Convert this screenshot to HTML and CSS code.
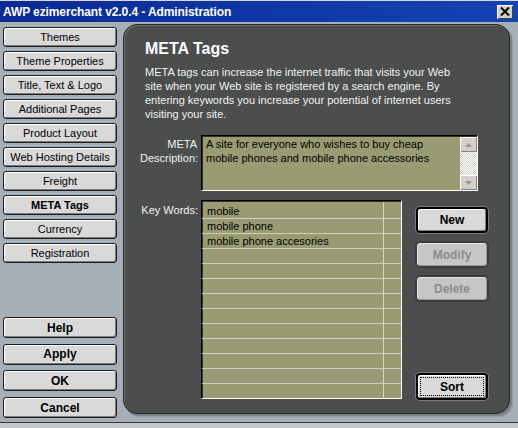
FILE: index.html
```html
<!DOCTYPE html>
<html>
<head>
<meta charset="utf-8">
<title>AWP ezimerchant v2.0.4 - Administration</title>
<link rel="stylesheet" href="styles.css">
</head>
<body>
<div class="window">
  <div class="titlebar">
    <span class="title">AWP ezimerchant v2.0.4 - Administration</span>
    <span class="close"><svg width="10" height="9" viewBox="0 0 10 9"><path d="M1 0.5 L9 8.5 M9 0.5 L1 8.5" stroke="#000" stroke-width="2" fill="none"/></svg></span>
  </div>
  <div class="main">
    <div class="sidebar">
      <div class="nav">
        <div class="btn">Themes</div>
        <div class="btn">Theme Properties</div>
        <div class="btn">Title, Text &amp; Logo</div>
        <div class="btn">Additional Pages</div>
        <div class="btn">Product Layout</div>
        <div class="btn">Web Hosting Details</div>
        <div class="btn">Freight</div>
        <div class="btn active">META Tags</div>
        <div class="btn">Currency</div>
        <div class="btn">Registration</div>
      </div>
      <div class="actions">
        <div class="btn strong">Help</div>
        <div class="btn strong">Apply</div>
        <div class="btn strong">OK</div>
        <div class="btn strong">Cancel</div>
      </div>
    </div>
    <div class="panel">
      <h1 class="heading">META Tags</h1>
      <p class="intro">META tags can increase the internet traffic that visits your Web site when your Web site is registered by a search engine. By entering keywords you increase your potential of internet users visiting your site.</p>
      <div class="desc-row">
        <div class="label">META<br>Description:</div>
        <div class="textarea">
          <div class="ta-text">A site for everyone who wishes to buy cheap mobile phones and mobile phone accessories</div>
          <div class="scrollbar">
            <div class="sb-btn"><svg width="7" height="4" viewBox="0 0 7 4"><path d="M0 4 L3.5 0 L7 4 Z" fill="#9a9a9a"/></svg></div>
            <div class="sb-track"></div>
            <div class="sb-btn"><svg width="7" height="4" viewBox="0 0 7 4"><path d="M0 0 L3.5 4 L7 0 Z" fill="#9a9a9a"/></svg></div>
          </div>
        </div>
      </div>
      <div class="kw-row">
        <div class="label kw-label">Key Words:</div>
        <div class="list">
          <div class="list-row">mobile</div>
          <div class="list-row">mobile phone</div>
          <div class="list-row">mobile phone accesories</div>
          <div class="list-row"></div>
          <div class="list-row"></div>
          <div class="list-row"></div>
          <div class="list-row"></div>
          <div class="list-row"></div>
          <div class="list-row"></div>
          <div class="list-row"></div>
          <div class="list-row"></div>
          <div class="list-row"></div>
          <div class="list-row"></div>
        </div>
        <div class="kw-buttons">
          <div class="pbtn default">New</div>
          <div class="pbtn disabled">Modify</div>
          <div class="pbtn disabled">Delete</div>
          <div class="pbtn default sort"><span class="focus">Sort</span></div>
        </div>
      </div>
    </div>
  </div>
  <div class="statusbar"></div>
</div>
</body>
</html>
```
FILE: styles.css
```css
* { box-sizing: border-box; }
html, body { margin: 0; padding: 0; }
body {
  width: 518px;
  height: 428px;
  overflow: hidden;
  background: #a6aeb6;
  font-family: "Liberation Sans", Arial, sans-serif;
  font-size: 11px;
  color: #000;
}
.window { width: 518px; height: 428px; display: flex; flex-direction: column; }

.titlebar {
  height: 22px;
  border-top: 1px solid #d8d8d8;
  background: linear-gradient(to right, #0a2a94, #1443b4);
  display: flex;
  align-items: center;
  justify-content: space-between;
  padding: 0 5px 0 3px;
}
.title { color: #fff; font-weight: bold; font-size: 12px; letter-spacing: -0.1px; }
.close {
  width: 16px;
  height: 14px;
  background: #d4d0c8;
  box-shadow: inset 1px 1px #fff, inset -1px -1px #404040;
  display: flex;
  align-items: center;
  justify-content: center;
}

.main { height: 400px; display: flex; padding: 2px 0 0 3px; }

.sidebar {
  width: 114px;
  height: 398px;
  display: flex;
  flex-direction: column;
  justify-content: space-between;
  padding: 3px 0 4px 0;
}
.nav { display: flex; flex-direction: column; gap: 4px; }
.actions { display: flex; flex-direction: column; gap: 5.6px; }
.btn {
  height: 20px;
  border: 1px solid #1c1c1c;
  border-radius: 3px;
  background: #d9d9d9;
  box-shadow: inset 1px 1px #fff, inset -1px -1px #7c7c7c;
  display: flex;
  align-items: center;
  justify-content: center;
  font-size: 11px;
}
.btn.active { font-weight: bold; }
.btn.strong { height: 21px; font-weight: bold; font-size: 12px; }

.panel {
  width: 387px;
  height: 390px;
  margin-left: 6px;
  border: 1px solid #262828;
  border-radius: 14px;
  background: #4b4e4d;
  box-shadow: inset 1px 1px #6e7171, 2px 2px 0 #7e848a, 3px 3px 0 #959ba1;
  padding: 14px 0 0 16px;
  color: #f2f2f2;
}
.heading {
  margin: 0 0 0 5px;
  font-size: 16px;
  line-height: 19px;
  font-weight: bold;
  color: #fff;
}
.intro {
  margin: 7px 0 0 5px;
  width: 318px;
  line-height: 14px;
  font-size: 11px;
}

.desc-row { display: flex; margin-top: 14px; }
.label {
  width: 57px;
  text-align: right;
  white-space: nowrap;
  line-height: 14px;
  padding-top: 2px;
}
.textarea {
  margin-left: 4px;
  width: 277px;
  height: 56px;
  border: 1px solid;
  border-color: #000 #fff #fff #000;
  box-shadow: inset 1px 1px #303030;
  background: #999c73;
  display: flex;
  color: #000;
}
.ta-text { flex: 1; padding: 1px 2px 0 4px; line-height: 14px; }
.scrollbar {
  width: 17px;
  margin-top: 1px;
  display: flex;
  flex-direction: column;
  background: repeating-conic-gradient(#ffffff 0 25%, #d4d0c8 0 50%) 0 0 / 2px 2px;
}
.sb-btn {
  height: 15px;
  background: #d4d0c8;
  box-shadow: inset 1px 1px #fff, inset -1px -1px #808080;
  display: flex;
  align-items: center;
  justify-content: center;
}
.sb-track { flex: 1; }

.kw-row { display: flex; margin-top: 9px; }
.kw-label { padding-top: 3px; width: 58px; }
.kw-label + .list { margin-left: 3px; }
.list {
  margin-left: 4px;
  width: 201px;
  height: 199px;
  border: 1px solid;
  border-color: #000 #fff #fff #000;
  box-shadow: inset 1px 1px #303030;
  background: linear-gradient(#d2d4c4, #d2d4c4) no-repeat 181px 0 / 1px 100%, #999c73;
  padding-top: 3px;
  overflow: hidden;
  color: #000;
}
.list-row {
  height: 15px;
  border-bottom: 1px solid #cfd1c0;
  line-height: 14px;
  padding-left: 5px;
}

.kw-buttons {
  margin-left: 14px;
  width: 72px;
  display: flex;
  flex-direction: column;
  padding-top: 7px;
}
.pbtn {
  height: 25px;
  margin-top: 9px;
  border: 1px solid #111;
  border-radius: 4px;
  background: #d9d9d9;
  box-shadow: 0 0 0 1px #7a7d7d, inset 1px 1px #fff, inset -1px -1px #808080;
  display: flex;
  align-items: center;
  justify-content: center;
  font-weight: bold;
  font-size: 12px;
  color: #000;
}
.pbtn.default { border: 2px solid #000; height: 26px; margin-top: 0; }
.pbtn.disabled {
  color: #8c8c8c;
  background: #c6c6c6;
  border-color: #3a3a3a;
  box-shadow: 0 0 0 1px #3c3e3e, inset 1px 1px #e6e6e6, inset -1px -1px #9a9a9a;
}
.pbtn.sort { margin-top: 72px; height: 27px; }
.focus {
  flex: 1;
  align-self: stretch;
  margin: 2px;
  border: 1px dotted #000;
  display: flex;
  align-items: center;
  justify-content: center;
}

.statusbar {
  flex: 1;
  border-top: 1px solid #3a3a3a;
  background: #c4c8cc;
}
```
